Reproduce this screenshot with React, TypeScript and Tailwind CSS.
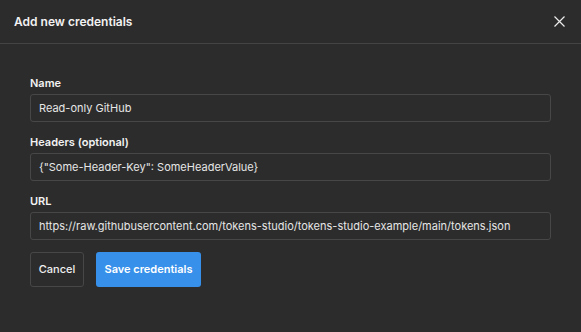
import React from "react";

export default function App() {
  return (
    <div className="w-[581px] h-[332px] bg-[#2c2c2c] text-white flex flex-col" style={{ fontFamily: "Inter, 'Noto Sans', sans-serif" }}>
      <div className="h-[44px] shrink-0 flex items-center justify-between pl-[14px] pr-[16px] border-b border-[#444444]">
        <div className="text-[12px] font-semibold text-[#f2f2f2]">Add new credentials</div>
        <svg width="11" height="11" viewBox="0 0 11 11" className="text-[#ececec]">
          <path d="M0.5 0.5 L10.5 10.5 M10.5 0.5 L0.5 10.5" stroke="currentColor" strokeWidth="1.2" fill="none" />
        </svg>
      </div>
      <div className="flex flex-col px-[30px] pt-[31px]">
        <Field label="Name" value="Read-only GitHub" />
        <Field label="Headers (optional)" value={'{"Some-Header-Key": SomeHeaderValue}'} />
        <Field label="URL" value="https://raw.githubusercontent.com/tokens-studio/tokens-studio-example/main/tokens.json" />
        <div className="flex gap-[12px] mt-[0px]">
          <button className="h-[35px] w-[54px] border border-[#474747] rounded-[3px] text-[11px] font-medium text-[#f0f0f0]">Cancel</button>
          <button className="h-[35px] w-[105px] bg-[#3790ea] rounded-[3px] text-[11px] font-semibold text-white">Save credentials</button>
        </div>
      </div>
    </div>
  );
}

function Field({ label, value }: { label: string; value: string }) {
  return (
    <div className="flex flex-col mb-[12px]">
      <div className="text-[11px] leading-[16px] font-semibold text-[#f2f2f2] mb-[3px]">{label}</div>
      <div className="h-[28px] border border-[#474747] rounded-[3px] flex items-center px-[8px] text-[11px] text-[#e6e6e6] whitespace-nowrap overflow-hidden"><span>{value}</span></div>
    </div>
  );
}
